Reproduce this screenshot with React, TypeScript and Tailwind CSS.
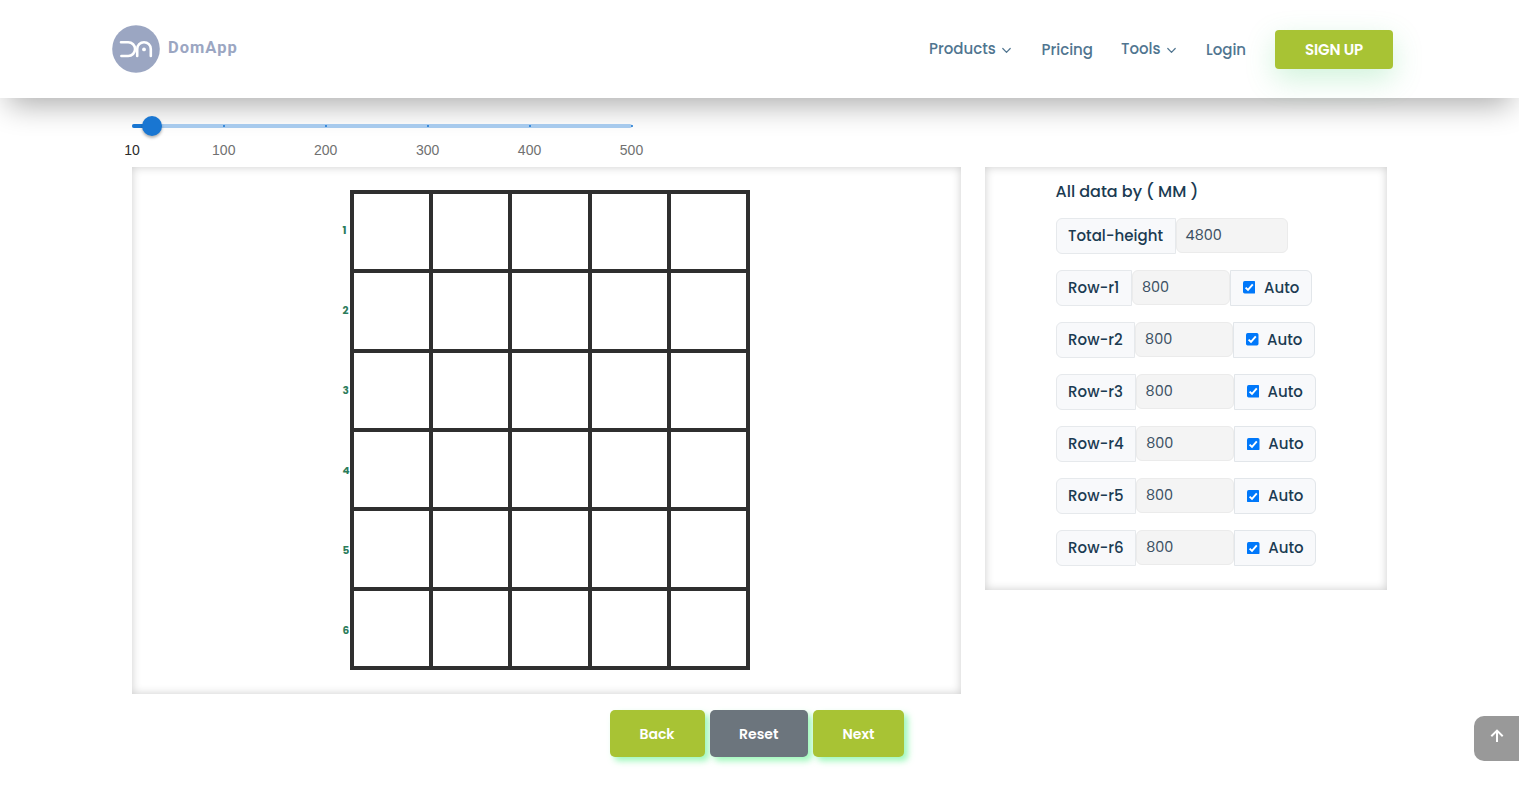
import React from "react";

const marks = [10, 100, 200, 300, 400, 500];
const MIN = 10;
const MAX = 500;
const value = 30;
const pos = (v: number) => `${((v - MIN) / (MAX - MIN)) * 100}%`;

const rows = [
  { id: 1, label: "w-[76.4px]" },
  { id: 2, label: "w-[79.5px]" },
  { id: 3, label: "w-[80px]" },
  { id: 4, label: "w-[80.6px]" },
  { id: 5, label: "w-[80.4px]" },
  { id: 6, label: "w-[80.6px]" },
];

function Chevron() {
  return (
    <svg className="ml-2 mt-[2px] h-[9px] w-[9px]" viewBox="0 0 9 9" fill="none" stroke="currentColor" strokeWidth="1.2" strokeLinecap="round" strokeLinejoin="round">
      <path d="M0.8 2.5 4.5 6.3 8.2 2.5" />
    </svg>
  );
}

function Logo() {
  return (
    <div className="flex items-center">
      <svg className="h-12 w-12" viewBox="0 0 48 48" fill="none">
        <circle cx="24" cy="24" r="23.8" fill="#9ba6c2" />
        <g stroke="#fff" strokeWidth="2.6" strokeLinecap="round">
          <path d="M9 17.2h7.2a6.9 6.9 0 0 1 0 13.8H9.4" />
          <path d="M25.2 31v-7a6.8 6.8 0 0 1 13.6 0v7" />
        </g>
        <circle cx="32" cy="24.4" r="1.9" fill="#fff" />
      </svg>
      <span className="ml-2 whitespace-nowrap pb-[2px] font-['Roboto',sans-serif] text-[16.5px] font-bold leading-6 tracking-[1px] text-[#9ba6c2]">DomApp</span>
    </div>
  );
}

function Header() {
  return (
    <header className="relative z-10 flex h-[98px] shrink-0 items-center justify-between bg-white pl-28 pr-[126px] shadow-[0_15px_30px_-8px_rgba(0,0,0,0.33)]">
      <Logo />
      <nav className="flex items-center text-[15px] font-medium leading-6 text-[#507590]">
        <a className="flex w-[112.5px] items-center"><span className="mr-[-1.5px]">Products</span><Chevron /></a>
        <a className="w-[79.5px] pt-[1px]">Pricing</a>
        <a className="flex w-[85px] items-center"><span className="mr-[-1.5px]">Tools</span><Chevron /></a>
        <a className="w-[69px] pt-[1px]">Login</a>
        <a className="flex h-[39px] w-[118px] items-center justify-center rounded bg-[#a8c334] pt-[1px] text-[15px] font-semibold tracking-[-0.15px] text-white shadow-[0_10px_29px_0_rgba(68,206,111,0.25)]">SIGN UP</a>
      </nav>
    </header>
  );
}

function Slider() {
  return (
    <div className="ml-[132px] flex h-[69px] w-[499.5px] flex-col pt-[25.5px]">
      <div className="relative h-1 w-full rounded-full bg-[#a7caed]">
        <div className="h-1 rounded-full bg-[#1976d2]" style={{ width: pos(value) }} />
        {marks.slice(1).map((m) => (
          <span key={m} className="absolute top-[1px] h-[2px] w-[2px] -translate-x-px rounded-[1px] bg-[#1976d2]" style={{ left: pos(m) }} />
        ))}
        <span className="absolute top-[-8px] h-5 w-5 -translate-x-1/2 rounded-full bg-[#1976d2] shadow-[0_2px_3px_rgba(0,0,0,0.3)]" style={{ left: pos(value) }} />
        {marks.map((m) => (
          <span
            key={m}
            className={`absolute top-[16px] -translate-x-1/2 font-['Liberation_Sans',Arial,sans-serif] text-[14px] leading-5 ${m === 10 ? "text-[#2b2b2b]" : "text-[#717171]"}`}
            style={{ left: pos(m) }}
          >
            {m}
          </span>
        ))}
      </div>
    </div>
  );
}

function Board() {
  return (
    <section className="flex h-[527px] w-[828.6px] bg-white pl-[198px] pt-[23px] shadow-[inset_0_0_10px_rgba(0,0,0,0.2)]">
      <div className="flex w-5 flex-col pl-[12.5px]">
        {rows.map((r) => (
          <span key={r.id} className="flex h-20 items-center pt-[1px] text-[10.5px] font-bold text-[#2c7c5b]">{r.id}</span>
        ))}
      </div>
      <div className="grid h-[480px] w-[400px] grid-cols-5 grid-rows-6 gap-1 bg-[#2f2f2f] p-1">
        {Array.from({ length: 30 }, (_, i) => <div key={i} className="bg-white" />)}
      </div>
    </section>
  );
}

function Checkbox() {
  return (
    <svg className="h-[12.5px] w-[12.5px] shrink-0" viewBox="0 0 12 12" fill="none">
      <rect width="12" height="12" rx="1.6" fill="#0078fa" />
      <path d="M2.5 6.3 4.8 8.6 9.4 3.2" stroke="#fff" strokeWidth="1.8" />
    </svg>
  );
}

function DataPanel() {
  return (
    <section className="ml-6 h-[423px] w-[402px] bg-white pl-[71px] pt-3 text-[15px] font-medium leading-6 text-[#1b3b52] shadow-[inset_0_0_10px_rgba(0,0,0,0.2)]">
      <h2 className="whitespace-nowrap pt-[1px] text-[16px] tracking-[-0.02px]">All data by ( MM )</h2>
      <div className="mt-[13.5px] flex h-9 items-start">
        <span className="flex h-9 w-[120px] items-center rounded-l-md border border-[#e6e9ec] bg-[#f8f9fb] pl-[11.5px]">Total-height</span>
        <span className="flex h-[35px] w-[112.5px] items-center rounded-md border border-[#ebebeb] bg-[#f4f4f4] pl-[9px] text-[14.4px] font-normal text-[#3b5063]">4800</span>
      </div>
      <div className="mt-4 flex flex-col gap-4">
        {rows.map((r) => (
          <div key={r.id} className="flex h-[36.1px] items-start">
            <span className={`flex h-9 items-center whitespace-nowrap rounded-l-md border border-[#e6e9ec] bg-[#f8f9fb] pl-[11.5px] ${r.label}`}>Row-r{r.id}</span>
            <span className="flex h-[35px] w-[98px] items-center rounded-md border border-[#ebebeb] bg-[#f4f4f4] pl-[9px] text-[14.4px] font-normal text-[#3b5063]">800</span>
            <label className="flex h-9 w-[82px] items-center rounded-r-md border border-[#e2e6ea] bg-[#f8f9fb] pl-[12px]">
              <Checkbox />
              <span className="ml-[8.5px]">Auto</span>
            </label>
          </div>
        ))}
      </div>
    </section>
  );
}

function ActionBar() {
  const base = "flex h-[47px] items-center justify-center rounded-[5px] pt-[2px] text-[14px] font-semibold text-white shadow-[4px_4px_6px_rgba(78,240,130,0.55)]";
  return (
    <div className="mt-4 flex justify-center gap-[5px] pr-[5.5px]">
      <button className={`${base} w-[95px] bg-[#a8c334]`}>Back</button>
      <button className={`${base} w-[98.5px] bg-[#6c757d]`}>Reset</button>
      <button className={`${base} w-[91px] bg-[#a8c334]`}>Next</button>
    </div>
  );
}

export default function App() {
  return (
    <div className="relative flex h-[791px] w-full flex-col overflow-hidden bg-white font-['Poppins','Inter',sans-serif]">
      <Header />
      <main className="flex flex-col">
        <div className="relative z-20"><Slider /></div>
        <div className="flex items-start pl-[132px]">
          <Board />
          <DataPanel />
        </div>
        <ActionBar />
      </main>
      <button aria-label="Scroll to top" className="absolute right-0 top-[716px] flex h-[45px] w-[45px] items-center justify-center rounded-l-[10px] bg-[#999] pb-[5px]">
        <svg className="h-[14px] w-[14px]" viewBox="0 0 14 14" fill="none" stroke="#fff" strokeWidth="2">
          <path d="M7 13V2M1.3 7.3 7 1.6l5.7 5.7" />
        </svg>
      </button>
    </div>
  );
}
